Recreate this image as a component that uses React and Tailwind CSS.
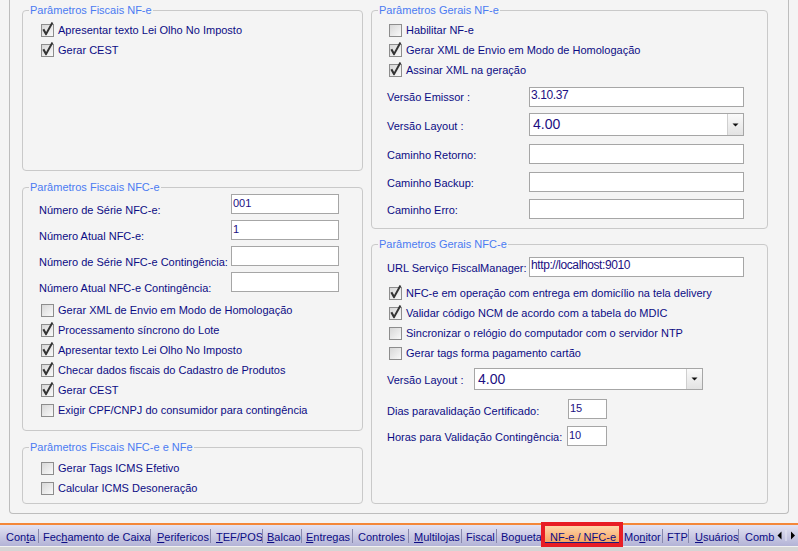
import React from "react";

function Check({ checked }) {
  return (
    <svg width="13" height="13" viewBox="0 0 13 13" className="shrink-0 overflow-visible">
      <defs>
        <linearGradient id="cbbg" x1="0" y1="0" x2="1" y2="1">
          <stop offset="0" stopColor="#d6d6d6" />
          <stop offset="1" stopColor="#fbfbfb" />
        </linearGradient>
      </defs>
      <rect x="0.5" y="0.5" width="12" height="12" fill="url(#cbbg)" stroke="#8d8d8d" />
      {checked && (
        <polygon
          points="1.4,5.8 3.3,4.7 5.1,8 10.6,-1.9 12.3,-1.1 5.5,11.3 4.5,11.3"
          fill="#343434"
        />
      )}
    </svg>
  );
}

function CheckRow({ checked, children }) {
  return (
    <div className="flex h-[20px] items-center gap-[4px] whitespace-nowrap">
      <Check checked={checked} />
      <span className="leading-[13px]">{children}</span>
    </div>
  );
}

function Group({ title, className, children }) {
  return (
    <div className={`relative rounded-[4px] border border-[#c9c9c9] ${className}`}>
      <span className="absolute left-[6px] top-[-7px] bg-[#f4f4f4] px-[1px] leading-[13px] text-[#4b7bf2] whitespace-nowrap">
        {title}
      </span>
      {children}
    </div>
  );
}

function Field({ className, big, children }) {
  return (
    <div
      className={`h-[20px] shrink-0 border border-[#a6a6a6] bg-white pl-[1px] text-[#1c0f82] ${
        big ? "text-[12px] leading-[15px] tracking-[-0.4px]" : "text-[11px] leading-[17px]"
      } ${className}`}
    >
      {children}
    </div>
  );
}

function Select({ className, h }) {
  return (
    <div className={`flex shrink-0 border border-[#a6a6a6] bg-white ${className} ${h}`}>
      <div className="flex-1 pl-[3px] text-[14px] leading-[20px] text-[#1c0f82]">4.00</div>
      <div className="flex w-[16px] items-center justify-center border-l border-[#cfcfcf] bg-linear-to-b from-[#fafafa] to-[#e3e3e3]">
        <svg width="7" height="4" viewBox="0 0 7 4">
          <polygon points="0.5,0.5 6.5,0.5 3.5,3.6" fill="#111" />
        </svg>
      </div>
    </div>
  );
}

const tabs = [
  { pre: "Con", u: "t", post: "a", cls: "w-[38px] pl-[6px]", sep: true },
  { pre: "Fec", u: "h", post: "amento de Caixa", cls: "w-[111px] pl-[4px]", sep: true },
  { pre: "", u: "P", post: "erifericos", cls: "w-[59px] pl-[6px]", sep: true },
  { pre: "", u: "T", post: "EF/POS", cls: "w-[51px] pl-[5px]", sep: true },
  { pre: "", u: "B", post: "alcao", cls: "w-[38px] pl-[4px]", sep: true },
  { pre: "", u: "E", post: "ntregas", cls: "w-[50px] pl-[4px]", sep: true },
  { pre: "Controles", u: "", post: "", cls: "w-[55px] pl-[5px]", sep: true },
  { pre: "", u: "M", post: "ultilojas", cls: "w-[52px] pl-[5px]", sep: true },
  { pre: "Fiscal", u: "", post: "", cls: "w-[34px] pl-[4px]", sep: true },
  { pre: "Bogueta", u: "", post: "", cls: "w-[44px] pl-[4px]", sep: false },
];

const tabs2 = [
  { pre: "Mo", u: "n", post: "itor", cls: "w-[39px] pl-[1px]", sep: true },
  { pre: "FTP", u: "", post: "", cls: "w-[25px] pl-[4px]", sep: true },
  { pre: "", u: "U", post: "suários", cls: "w-[49px] pl-[6px]", sep: true },
  { pre: "Comb", u: "", post: "", cls: "w-[36px] pl-[6px]", sep: false },
];

function Tab({ t }) {
  return (
    <>
      <div className={`h-full shrink-0 overflow-hidden whitespace-nowrap pt-[6px] leading-[13px] ${t.cls}`}>
        {t.pre}
        {t.u && <u>{t.u}</u>}
        {t.post}
      </div>
      {t.sep && <span className="h-[14px] w-[1px] shrink-0 self-center bg-[#8888ac]" />}
    </>
  );
}

export default function App() {
  return (
    <div className="h-[551px] w-[798px] overflow-hidden bg-[#f4f4f4] font-['Liberation_Sans',Arial,sans-serif] text-[11px] text-[#0c0c84]">
      {/* main frame */}
      <div className="ml-[9px] flex h-[514px] w-[780px] gap-[8px] rounded-b-[4px] border-x border-b border-[#bdbdbd] pl-[12px] pr-[20px] pt-[10px]">
        {/* left column */}
        <div className="flex w-[341px] shrink-0 flex-col gap-[16px]">
          <Group title="Parâmetros Fiscais NF-e" className="h-[161px] pl-[18px] pt-[9px]">
            <CheckRow checked>Apresentar texto Lei Olho No Imposto</CheckRow>
            <CheckRow checked>Gerar CEST</CheckRow>
          </Group>

          <Group title="Parâmetros Fiscais NFC-e" className="h-[244px] pl-[16px] pt-[6px]">
            {[
              ["Número de Série NFC-e:", "001"],
              ["Número Atual NFC-e:", "1"],
              ["Número de Série NFC-e Contingência:", ""],
              ["Número Atual NFC-e Contingência:", ""],
            ].map(([l, v]) => (
              <div key={l} className="flex h-[26px]">
                <span className="w-[192px] shrink-0 whitespace-nowrap pt-[10px] leading-[13px]">{l}</span>
                <Field className="w-[108px]">{v}</Field>
              </div>
            ))}
            <div className="ml-[2px] mt-[2px]">
              <CheckRow>Gerar XML de Envio em Modo de Homologação</CheckRow>
              <CheckRow checked>Processamento síncrono do Lote</CheckRow>
              <CheckRow checked>Apresentar texto Lei Olho No Imposto</CheckRow>
              <CheckRow checked>Checar dados fiscais do Cadastro de Produtos</CheckRow>
              <CheckRow checked>Gerar CEST</CheckRow>
              <CheckRow>Exigir CPF/CNPJ do consumidor para contingência</CheckRow>
            </div>
          </Group>

          <Group title="Parâmetros Fiscais NFC-e e NFe" className="h-[57px] pl-[18px] pt-[10px]">
            <CheckRow>Gerar Tags ICMS Efetivo</CheckRow>
            <CheckRow>Calcular ICMS Desoneração</CheckRow>
          </Group>
        </div>

        {/* right column */}
        <div className="flex w-[397px] shrink-0 flex-col gap-[15px]">
          <Group title="Parâmetros Gerais NF-e" className="h-[219px] pl-[15px] pt-[9px]">
            <div className="ml-[2px]">
              <CheckRow>Habilitar NF-e</CheckRow>
              <CheckRow checked>Gerar XML de Envio em Modo de Homologação</CheckRow>
              <CheckRow checked>Assinar XML na geração</CheckRow>
            </div>
            <div className="mt-[7px] flex items-center">
              <span className="w-[142px] shrink-0 leading-[13px]">Versão Emissor :</span>
              <Field big className="w-[215px]">3.10.37</Field>
            </div>
            <div className="mt-[6px] flex items-center">
              <span className="w-[142px] shrink-0 pt-[4px] leading-[13px]">Versão Layout :</span>
              <Select className="w-[215px]" h="h-[23px]" />
            </div>
            <div className="mt-[8px] flex items-center">
              <span className="w-[142px] shrink-0 pt-[3px] leading-[13px]">Caminho Retorno:</span>
              <Field className="w-[215px]" />
            </div>
            <div className="mt-[8px] flex items-center">
              <span className="w-[142px] shrink-0 pt-[3px] leading-[13px]">Caminho Backup:</span>
              <Field className="w-[215px]" />
            </div>
            <div className="mt-[7px] flex items-center">
              <span className="w-[142px] shrink-0 pt-[3px] leading-[13px]">Caminho Erro:</span>
              <Field className="w-[215px]" />
            </div>
          </Group>

          <Group title="Parâmetros Gerais NFC-e" className="h-[260px] pl-[15px] pt-[12px]">
            <div className="flex items-center">
              <span className="w-[142px] shrink-0 whitespace-nowrap pt-[2px] leading-[13px]">URL Serviço FiscalManager:</span>
              <Field big className="w-[215px]">http://localhost:9010</Field>
            </div>
            <div className="ml-[2px] mt-[6px]">
              <CheckRow checked>NFC-e em operação com entrega em domicílio na tela delivery</CheckRow>
              <CheckRow checked>Validar código NCM de acordo com a tabela do MDIC</CheckRow>
              <CheckRow>Sincronizar o relógio do computador com o servidor NTP</CheckRow>
              <CheckRow>Gerar tags forma pagamento cartão</CheckRow>
            </div>
            <div className="mt-[5px] flex items-center">
              <span className="w-[87px] shrink-0 pt-[2px] leading-[13px]">Versão Layout :</span>
              <Select className="w-[229px]" h="h-[22px]" />
            </div>
            <div className="mt-[9px] flex items-center">
              <span className="w-[181px] shrink-0 whitespace-nowrap pt-[4px] leading-[13px]">Dias paravalidação Certificado:</span>
              <Field className="w-[39px]">15</Field>
            </div>
            <div className="mt-[7px] flex items-center">
              <span className="w-[180px] shrink-0 whitespace-nowrap pt-[3px] leading-[13px]">Horas para Validação Contingência:</span>
              <Field className="w-[40px]">10</Field>
            </div>
          </Group>
        </div>
      </div>

      {/* tab strip */}
      <div className="mt-[9px] h-[2px] bg-[#f4883a]" />
      <div className="flex h-[21px] bg-linear-to-b from-[#e3e3f3] to-[#b3b3d6]">
        {tabs.map((t, i) => (
          <Tab key={i} t={t} />
        ))}
        <div className="relative -mt-[3px] h-[25px] w-[82px] shrink-0 self-start border-[4px] border-[#e81d25] bg-linear-to-b from-[#fed6aa] to-[#f6a25b]">
          <div className="whitespace-nowrap pl-[5px] pt-[6px] leading-[10px]">NF-e / NFC-e</div>
          <div className="h-[1px] w-[74px] bg-[#1c1c7c]" />
        </div>
        {tabs2.map((t, i) => (
          <Tab key={i} t={t} />
        ))}
        <div className="w-[23px] shrink-0">
          <svg width="23" height="21" viewBox="0 0 23 21">
            <polygon points="2.5,10.5 6.5,6.5 6.5,14.5" fill="#000" />
            <rect x="10.5" y="5" width="1" height="11" fill="#e8e8f4" />
            <polygon points="16,6.5 20,10.5 16,14.5" fill="#000" />
          </svg>
        </div>
      </div>
      <div className="h-[1px] bg-[#f2f2f2]" />
      <div className="h-[5px] bg-[#d5d5d5]" />
    </div>
  );
}
